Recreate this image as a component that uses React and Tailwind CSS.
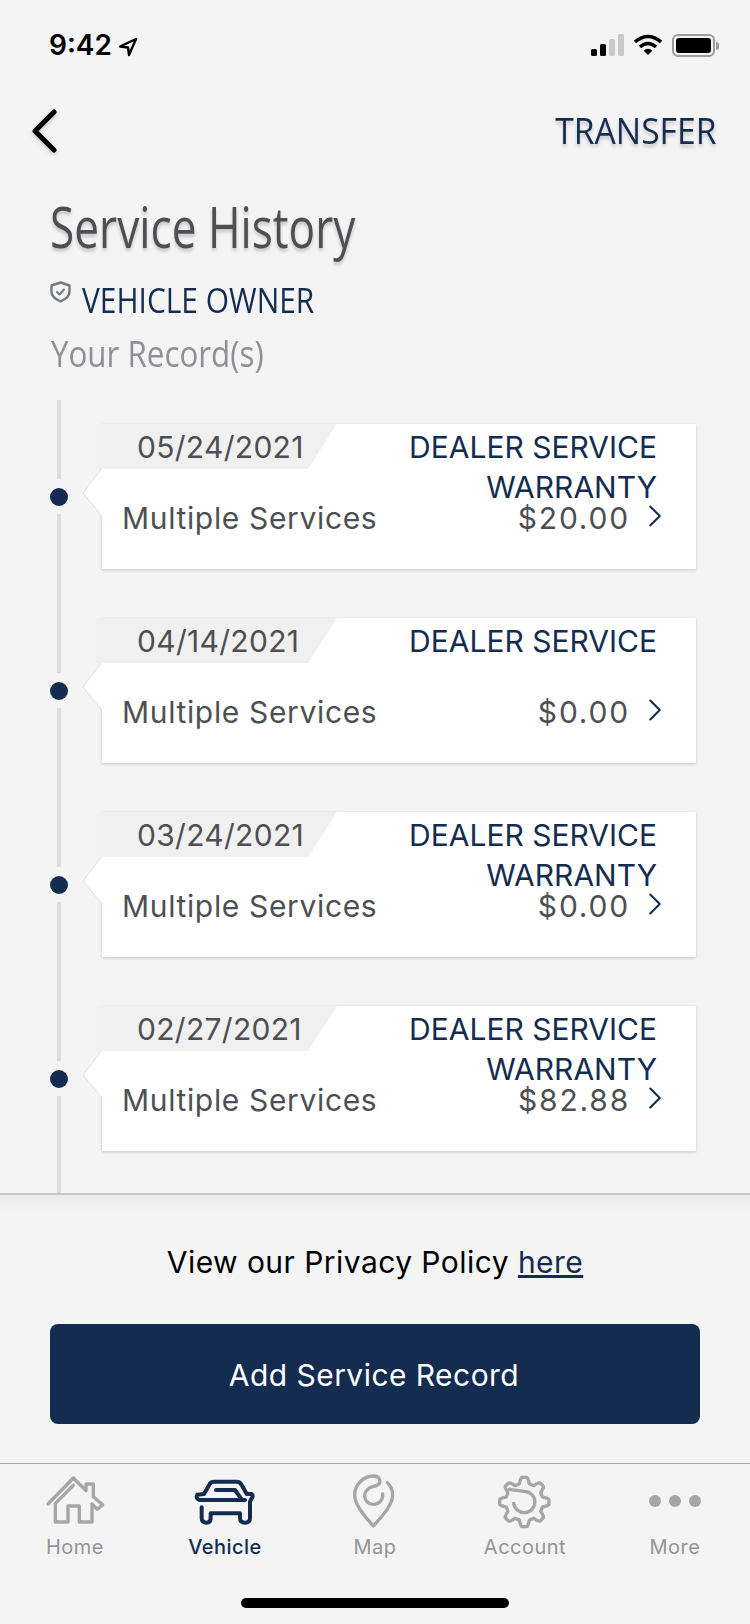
import { ChevronRight } from 'lucide-react';

const records = [
    { date: '05/24/2021', types: ['DEALER SERVICE', 'WARRANTY'], amount: '$20.00' },
    { date: '04/14/2021', types: ['DEALER SERVICE'], amount: '$0.00' },
    { date: '03/24/2021', types: ['DEALER SERVICE', 'WARRANTY'], amount: '$0.00' },
    { date: '02/27/2021', types: ['DEALER SERVICE', 'WARRANTY'], amount: '$82.88' },
];

// wavy gear outline, 8 teeth, in the same 210x186 box as the other tab icons
const gearPath = () => {
    const pts = [];
    for (let a = 0; a < 360; a += 3) {
        const t = (a * Math.PI) / 180;
        const k = Math.max(-1, Math.min(1, 1.8 * Math.cos(8 * t)));
        const r = 65 + 9 * k;
        pts.push(`${(103 + r * Math.sin(t)).toFixed(1)} ${(96 - r * Math.cos(t)).toFixed(1)}`);
    }
    return `M${pts.join(' L')} Z`;
};

const HomeIcon = () => (
    <svg width="70" height="62" viewBox="0 0 210 186" fill="none" stroke="#a5a6a8" strokeWidth="10" strokeLinejoin="round" strokeLinecap="round">
        <path d="M24 102 L100 24 L138 62 L138 42 L160 42 L160 80 L188 104 L172 118 L156 102 L156 156 L118 156 L118 108 L84 108 L84 156 L46 156 L46 104" />
        <path d="M46 100 L100 46" />
    </svg>
);

const CarIcon = () => (
    <svg width="70" height="62" viewBox="0 0 210 186" fill="none" stroke="#132c50" strokeWidth="12" strokeLinejoin="round" strokeLinecap="round">
        <path d="M165 90 L28 90 Q15 84 22 74 L42 72 L58 44 Q62 35 72 35 L140 35 Q150 35 155 45 L170 72 L185 72 Q192 78 183 88 L180 95 L180 145 Q180 158 165 158 Q150 158 150 145 L150 130 L62 130 L62 145 Q62 158 50 158 Q35 158 35 145 L35 112" />
        <path d="M78 60 L135 60 L155 88" />
    </svg>
);

const PinIcon = () => (
    <svg width="70" height="62" viewBox="0 0 210 186" fill="none" stroke="#a5a6a8" strokeWidth="10" strokeLinecap="round" strokeLinejoin="round">
        <path d="M142 38 C152 48 158 60 158 75 C158 105 125 140 100 168 C75 140 44 105 44 75 C44 45 70 18 100 18 C118 18 122 30 118 40 C112 50 100 48 90 53 C78 60 74 68 74 78 C74 92 86 103 100 103 C118 103 130 90 128 72" />
    </svg>
);

const GearIcon = () => (
    <svg width="70" height="62" viewBox="0 0 210 186" fill="none" stroke="#a5a6a8" strokeWidth="10" strokeLinecap="round" strokeLinejoin="round">
        <path d={gearPath()} />
        <path d="M71 100 A32 32 0 1 0 103 64 L58 58" />
    </svg>
);

const MoreIcon = () => (
    <div className="flex gap-[8px]">
        <span className="w-3 h-3 rounded-full bg-[#a5a6a8]"></span>
        <span className="w-3 h-3 rounded-full bg-[#a5a6a8]"></span>
        <span className="w-3 h-3 rounded-full bg-[#a5a6a8]"></span>
    </div>
);

const Shield = () => (
    <svg width="21" height="22" viewBox="0 0 21 22" fill="none" stroke="#757a82" strokeWidth="2.4" strokeLinecap="round" strokeLinejoin="round">
        <path d="M10.5 1.5 L19.5 4.5 L19.5 11 C19.5 15.5 15 18.5 10.5 20.5 C6 18.5 1.5 15.5 1.5 11 L1.5 4.5 Z" />
        <path d="M7 11 L9.5 13.5 L14 8.5" strokeWidth="2" />
    </svg>
);

const tabs = [
    { label: 'Home', icon: <HomeIcon /> },
    { label: 'Vehicle', icon: <CarIcon />, active: true },
    { label: 'Map', icon: <PinIcon /> },
    { label: 'Account', icon: <GearIcon /> },
    { label: 'More', icon: <MoreIcon /> },
];

function RecordRow({ record }) {
    return (
        <div className="flex h-[194px] shrink-0">
            <div className="w-[118px] pl-[50px] pr-[50px] flex flex-col items-center shrink-0">
                <div className="w-1 h-[79px] bg-[#dcdde0]"></div>
                <div className="w-[18px] h-[18px] rounded-full bg-[#132c50] shrink-0 mt-[9px] mb-[8px]"></div>
                <div className="w-1 flex-1 bg-[#dcdde0]"></div>
            </div>
            <div className="mt-[24px] -ml-4 w-[594px] h-[145px] bg-white relative shadow-[0_1px_3px_rgba(0,0,0,0.2)] text-[30px] leading-[40px]">
                <svg className="absolute left-[-19px] top-[44px]" width="20" height="49" viewBox="0 0 20 49">
                    <path d="M19 0 L0 25 L19 48 L20 48 L20 0 Z" fill="#fff" />
                    <path d="M19 0 L0 25 L19 48" fill="none" stroke="#dfdfdf" strokeWidth="1" />
                </svg>
                <div className="flex justify-between h-[74px]">
                    <div className="-ml-[6px] w-[241px] h-[45px] bg-[#f0f0f0] [clip-path:polygon(0_0,100%_0,88%_100%,0_100%)] pl-[41px] pt-[3px] text-[#4d4f53] tracking-[0.3px]">{record.date}</div>
                    <div className="text-right pr-[39px] text-[#132c50] pt-[3px] tracking-[0px]">
                        {record.types.map((t) => <div key={t}>{t}</div>)}
                    </div>
                </div>
                <div className="flex justify-between items-center pl-5 pr-[22px]">
                    <span className="text-[#4d4f53] tracking-[0.65px]">Multiple Services</span>
                    <span className="flex items-center text-[#4d4f53] tracking-[1.8px]">
                        {record.amount}
                        <ChevronRight className="ml-[6px] -mt-1" size={38} strokeWidth={1.3} color="#132c50" />
                    </span>
                </div>
            </div>
        </div>
    );
}

export default function App() {
    return (
        <div className="w-[750px] h-[1624px] bg-[#f4f4f4] flex flex-col overflow-hidden font-['Inter',sans-serif]">
            <div className="h-[101px] shrink-0 flex justify-between pl-[49px] pr-[31px] pt-[27px]">
                <div className="flex items-start">
                    <span className="text-[28px] leading-[36px] font-semibold text-black">9:42</span>
                    <svg className="ml-[6px] mt-[10px]" width="20" height="20" viewBox="0 0 20 20" fill="none" stroke="#000" strokeWidth="2.4" strokeLinejoin="round">
                        <path d="M18 2 L2 9.5 L10 10.5 L11 18 Z" />
                    </svg>
                </div>
                <div className="flex items-start mt-[7px] gap-[9px]">
                    <svg width="34" height="22" viewBox="0 0 34 22">
                        <rect x="1" y="15" width="6" height="7" rx="1.5" fill="#000" />
                        <rect x="10" y="10" width="6" height="12" rx="1.5" fill="#000" />
                        <rect x="19" y="5" width="6" height="17" rx="1.5" fill="#c9c9c9" />
                        <rect x="28" y="0" width="6" height="22" rx="1.5" fill="#c9c9c9" />
                    </svg>
                    <svg width="30" height="22" viewBox="0 0 30 22" fill="none" stroke="#000" strokeWidth="3.6">
                        <path d="M2 8 Q15 -3 28 8" />
                        <path d="M7 13 Q15 6 23 13" />
                        <path d="M15 21 L10.5 16.5 Q15 13 19.5 16.5 Z" fill="#000" stroke="none" />
                    </svg>
                    <div className="flex items-center">
                        <div className="w-[43px] h-[23px] rounded-[6px] border-2 border-[#9b9b9b] p-[2px]">
                            <div className="w-full h-full rounded-[3px] bg-black"></div>
                        </div>
                        <div className="w-[3px] h-[8px] bg-[#9b9b9b] rounded-r ml-[1px]"></div>
                    </div>
                </div>
            </div>

            <div className="h-[60px] shrink-0 flex justify-between items-center pl-[30px] pr-[34px]">
                <svg width="30" height="46" viewBox="0 0 30 46" fill="none" stroke="#000" strokeWidth="5" strokeLinecap="round" strokeLinejoin="round" className="drop-shadow-[0_2px_2px_rgba(0,0,0,0.2)]">
                    <path d="M24 4 L5 23 L24 42" />
                </svg>
                <span className="text-[#132c50] font-['Open_Sans',sans-serif] font-medium text-[36px] leading-[46px] origin-right scale-x-[0.935] [text-shadow:0_3px_4px_rgba(0,0,0,0.2)]">TRANSFER</span>
            </div>

            <div className="pl-[50px] pt-[33px] h-[239px] shrink-0 font-['Open_Sans',sans-serif]">
                <h1 className="text-[#4d4f53] font-normal text-[56px] leading-[64px] origin-left scale-x-[0.79] [text-shadow:0_3px_4px_rgba(0,0,0,0.2)] whitespace-nowrap">Service History</h1>
                <div className="flex items-start mt-[23px]">
                    <Shield />
                    <span className="ml-[11px] mt-[1px] text-[#132c50] font-medium text-[34px] leading-[36px] origin-left scale-x-[0.88] whitespace-nowrap">VEHICLE OWNER</span>
                </div>
                <div className="text-[#8e9094] text-[36px] leading-[48px] origin-left scale-x-[0.87] whitespace-nowrap mt-[12px] ml-[1px]">Your Record(s)</div>
            </div>

            <div className="h-[793px] shrink-0 flex flex-col overflow-hidden">
                {records.map((r) => <RecordRow key={r.date} record={r} />)}
                <div className="flex-1 ml-[57px] w-1 bg-[#dcdde0]"></div>
            </div>

            <div className="h-[270px] shrink-0 border-t-2 border-[#c8c8c8] flex flex-col">
                <div className="h-[16px] shrink-0 bg-gradient-to-b from-[#ebebeb] to-[#f4f4f4]"></div>
                <div className="text-center text-[30px] leading-[40px] text-black mt-[31px] tracking-[0.45px]">
                    View our Privacy Policy <a className="text-[#132c50] underline">here</a>
                </div>
                <div className="mx-[50px] mt-[42px] h-[100px] pt-[3px] pr-[2px] rounded-[8px] bg-[#132c50] flex items-center justify-center text-white text-[30px] tracking-[0.45px]">Add Service Record</div>
            </div>

            <div className="flex-1 border-t border-[#a8a8a8] relative">
                <div className="grid grid-cols-5 pt-[6px]">
                    {tabs.map((tab) => (
                        <div key={tab.label} className="flex flex-col items-center">
                            <div className="h-[62px] flex items-center justify-center">{tab.icon}</div>
                            <span className={`text-[20px] leading-[28px] mt-[1px] tracking-[0.5px] ${tab.active ? 'text-[#132c50] font-medium' : 'text-[#929498]'}`}>{tab.label}</span>
                        </div>
                    ))}
                </div>
                <div className="absolute left-[241px] bottom-[16px] w-[268px] h-[10px] rounded-full bg-black"></div>
            </div>
        </div>
    );
}
